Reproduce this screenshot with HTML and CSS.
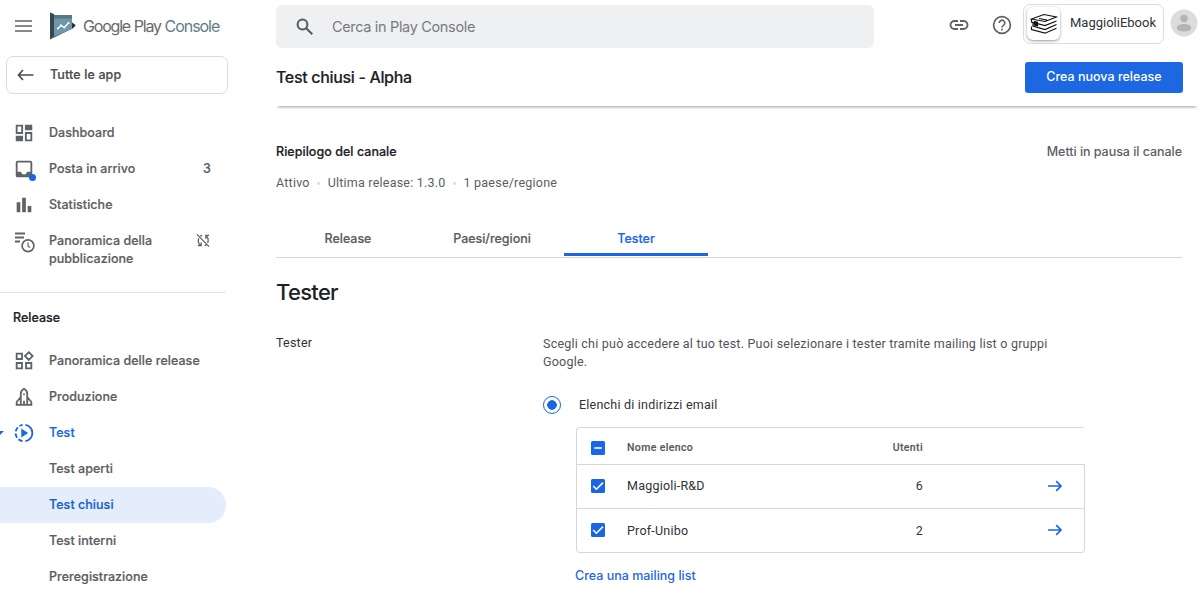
FILE: index.html
```html
<!DOCTYPE html>
<html lang="it">
<head>
<meta charset="utf-8">
<title>Google Play Console</title>
<link rel="stylesheet" href="styles.css">
</head>
<body>
<div class="app">
  <aside class="sidebar">
    <div class="brand">
      <svg class="menu-icon" viewBox="0 0 18 14"><path d="M0 2h17M0 7h17M0 12h17"/></svg>
      <svg class="logo" viewBox="0 0 26 28">
        <path fill="#37474f" d="M0 .5 4 2v22.500L0 27.500z"/>
        <path fill="#455a64" d="M0 27.500 4 23.500 20 17l2.500-.5z"/>
        <path fill="#6f96aa" d="M4 3h18v14L4 24.500z"/>
        <path fill="#54778a" d="M4 3h18v3.500H4z"/>
        <path fill="#263238" d="M22 10.500l3.300 2.300v1.200L22 17z"/>
        <path fill="none" stroke="#fff" stroke-width="1.300" d="M8 16.500l3-3 3.300 2 4.200-4.500"/>
        <g fill="#fff"><circle cx="8" cy="16.500" r="1.100"/><circle cx="11" cy="13.400" r="1.100"/><circle cx="14.300" cy="15.500" r="1.100"/><circle cx="18.500" cy="11" r="1.100"/></g>
      </svg>
      <span class="brand-name">Google Play <span class="brand-sub">Console</span></span>
    </div>
    <a class="all-apps">
      <svg class="back" viewBox="0 0 17 12"><path d="M6 1 1.500 6 6 11M1.500 6H16.500"/></svg>
      <span>Tutte le app</span>
    </a>
    <nav class="nav">
      <a class="item"><svg class="ico" viewBox="0 0 24 24"><path d="M19 5v2h-4V5h4M9 5v6H5V5h4m10 8v6h-4v-6h4M9 17v2H5v-2h4M21 3h-8v6h8V3zM11 3H3v10h8V3zm10 8h-8v10h8V11zm-10 4H3v6h8v-6z"/><path d="M14 4h6v4h-6zM4 16h6v4H4z"/></svg><span>Dashboard</span></a>
      <a class="item"><span class="badge-wrap"><svg class="ico" viewBox="0 0 24 24"><path d="M19 3H5a2 2 0 0 0-2 2v14a2 2 0 0 0 2 2h14a2 2 0 0 0 2-2V5a2 2 0 0 0-2-2zm0 12h-4a3 3 0 0 1-6 0H5V5h14z"/></svg><i class="dot"></i></span><span>Posta in arrivo</span><span class="count">3</span></a>
      <a class="item"><svg class="ico" viewBox="0 0 24 24"><path d="M4 9h4v11H4zM10 4h4v16h-4zM16 13h4v7h-4z"/></svg><span>Statistiche</span></a>
      <a class="item two-line">
        <svg class="ico-wide" viewBox="0 0 21 21"><path fill="none" stroke="#5f6368" stroke-width="1.800" d="M0 1.500h10M0 5.500h9M0 9.500h5"/><path fill="none" stroke="#5f6368" stroke-width="1.200" d="M13 10.500V14l2.200 1.500"/><circle cx="13" cy="13.700" r="5.900" fill="none" stroke="#5f6368" stroke-width="1.700"/></svg>
        <span>Panoramica della<br>pubblicazione</span>
        <svg class="sync-off" viewBox="0 0 16 16"><path d="M1 1.500 14 14.500M6.500 2.500Q5 3 4.500 3.500M3 5.500Q1 10 5 13M2 13.500h3.500V10M9 13.500Q11 13 11.500 12M12.500 10.500Q14 6 11 3M14 2.500h-3.500V6"/></svg>
      </a>
    </nav>
    <div class="divider"></div>
    <h2 class="nav-title">Release</h2>
    <nav class="nav">
      <a class="item"><svg class="ico" viewBox="0 0 24 24"><path fill="none" stroke="#5f6368" stroke-width="2" d="M4 4h5.800v5.800H4zM4 14.200h5.800V20H4zM14.200 14.200H20V20h-5.800zM17.200 2.400 21.400 6.600l-4.200 4.200L13 6.600z"/></svg><span>Panoramica delle release</span></a>
      <a class="item"><svg class="ico" viewBox="0 0 24 24"><path fill="none" stroke="#5f6368" stroke-width="2" d="M8.500 20.500V8Q8.800 4.500 12 3q3.200 1.500 3.500 5v12.500M8.500 12 4 17.500v3h16v-3L15.500 12M12 21v-5"/><circle cx="12" cy="9" r="1" fill="#5f6368"/></svg><span>Produzione</span></a>
      <a class="item active"><i class="caret"></i><svg class="ico" viewBox="0 0 24 24"><path d="M9 7v10l7.500-5z"/><path fill="none" stroke="#1a66e6" stroke-width="2" d="M13.500 3.100a9 9 0 0 1 0 17.800"/><path class="dash" d="M10.500 20.900a9 9 0 0 1 0-17.800"/></svg><span>Test</span></a>
      <a class="item sub">Test aperti</a>
      <a class="item sub selected">Test chiusi</a>
      <a class="item sub">Test interni</a>
      <a class="item sub">Preregistrazione</a>
    </nav>
  </aside>

  <main class="main">
    <header class="topbar">
      <div class="search">
        <svg viewBox="0 0 18 18"><circle cx="6.500" cy="6.500" r="4.900"/><path d="M10.200 10.200 16.300 16.300"/></svg>
        <span>Cerca in Play Console</span>
      </div>
      <svg class="link-icon" viewBox="0 0 20 12"><path d="M9 2H5.500a4 4 0 0 0 0 8H9M11 2h3.500a4 4 0 0 1 0 8H11M6 6h8"/></svg>
      <svg class="help-icon" viewBox="0 0 20 20"><circle cx="10" cy="10" r="8.400"/><path d="M7.200 8a2.800 2.700 0 1 1 4.500 2.100Q10 11.200 10 12.500M10 13.700v1.900"/></svg>
      <div class="account">
        <span class="thumb"><svg viewBox="0 0 28 22"><path d="M1.500 6 14 1.500 26.500 4 15 8.500zM1.500 6v3L15 12.500 26.500 8M3 10v3l12 3.500 11.500-5M1.500 13.500v3L15 20.200l11.500-5M9 5.500l8 1.500"/><path class="solid" d="M4.500 8.500l3 .8v3.500l-3-.8z"/></svg></span>
        <span>MaggioliEbook</span>
      </div>
      <svg class="avatar" viewBox="0 0 28 28"><circle cx="14" cy="14" r="13.500" fill="#dcdcdc"/><circle cx="14" cy="9.500" r="3.700" fill="#b4b4b4"/><ellipse cx="14" cy="18.800" rx="7.300" ry="3.800" fill="#b4b4b4"/></svg>
    </header>
    <div class="page-head">
      <h1>Test chiusi - Alpha</h1>
      <button class="primary">Crea nuova release</button>
    </div>
    <div class="content">
      <div class="summary-row"><h3>Riepilogo del canale</h3><a class="pause">Metti in pausa il canale</a></div>
      <p class="status"><span>Attivo</span><i></i><span>Ultima release: 1.3.0</span><i></i><span>1 paese/regione</span></p>
      <div class="tabs">
        <a class="tab">Release</a>
        <a class="tab">Paesi/regioni</a>
        <a class="tab on">Tester</a>
      </div>
      <h2 class="section">Tester</h2>
      <div class="form">
        <div class="label">Tester</div>
        <div class="field">
          <p class="desc">Scegli chi può accedere al tuo test. Puoi selezionare i tester tramite mailing list o gruppi<br>Google.</p>
          <div class="radio-row"><span class="radio"></span><span>Elenchi di indirizzi email</span></div>
          <div class="table">
            <div class="row head">
              <svg class="check" viewBox="0 0 14 14"><rect width="14" height="14" rx="1.500"/><path d="M3.300 7h7.500"/></svg>
              <span>Nome elenco</span><span class="num">Utenti</span>
            </div>
            <div class="row">
              <svg class="check" viewBox="0 0 14 14"><rect width="14" height="14" rx="1.500"/><path d="M2.200 7 5.400 10.200 12 3.600"/></svg>
              <span>Maggioli-R&amp;D</span><span class="num">6</span>
              <svg class="go" viewBox="0 0 16 12"><path d="M1 6h13M9.200 1.200 14 6 9.200 10.800"/></svg>
            </div>
            <div class="row last">
              <svg class="check" viewBox="0 0 14 14"><rect width="14" height="14" rx="1.500"/><path d="M2.200 7 5.400 10.200 12 3.600"/></svg>
              <span class="low">Prof-Unibo</span><span class="num low">2</span>
              <svg class="go" viewBox="0 0 16 12"><path d="M1 6h13M9.200 1.200 14 6 9.200 10.800"/></svg>
            </div>
          </div>
          <a class="create">Crea una mailing list</a>
        </div>
      </div>
    </div>
  </main>
</div>
</body>
</html>
```
FILE: styles.css
```css
* { box-sizing: border-box; }
body { margin: 0; background: #fff; color: #5a5e63; font: 500 12.5px/18px Inter, sans-serif; }
h1, h2, h3, p { margin: 0; }
svg { display: block; flex: none; }
.app { display: flex; width: 1204px; height: 600px; overflow: hidden; }

/* Sidebar */
.sidebar { width: 275px; flex: none; }
.brand { display: flex; align-items: center; height: 52px; padding-left: 15px; }
.menu-icon { width: 18px; height: 14px; fill: none; stroke: #5f6368; stroke-width: 1.6; }
.logo { width: 26px; height: 28px; margin-left: 17px; }
.brand-name { margin-left: 7px; font-size: 16px; font-weight: 400; letter-spacing: -1.2px; word-spacing: .5px; color: #66696b; white-space: nowrap; }
.brand-sub { color: #607d8b; letter-spacing: -1.05px; }
.all-apps { display: flex; align-items: center; width: 222px; height: 38px; margin: 4px 0 21px 6px; padding-left: 10px; border: 1px solid #dadce0; border-radius: 7px; color: #4a4d51; }
.all-apps span { margin-left: 16px; letter-spacing: .12px; }
.back { width: 17px; height: 12px; fill: none; stroke: #4a4d51; stroke-width: 1.7; }
.item, .all-apps, .nav-title, .tab, h3 { -webkit-text-stroke: .2px currentColor; }
.item { position: relative; display: flex; align-items: center; width: 226px; height: 36px; padding-left: 13px; letter-spacing: .04px; white-space: nowrap; }
.item > span:not(.badge-wrap):not(.count) { margin-left: 14px; }
.ico { width: 22px; height: 22px; fill: #5f6368; }
.badge-wrap { position: relative; }
.dot { position: absolute; right: -1px; bottom: -1px; width: 7px; height: 7px; border-radius: 50%; background: #1a66e6; }
.count { margin-left: auto; margin-right: 15px; }
.two-line { height: 54px; }
.two-line > span:not(.count) { margin-left: 13px !important; }
.ico-wide { width: 21px; height: 21px; align-self: flex-start; margin: 9px 0 0 2px; }
.sync-off { width: 15px; height: 15px; align-self: flex-start; margin: 10px 15px 0 auto; fill: none; stroke: #5f6368; stroke-width: 1.4; }
.divider { width: 226px; height: 1px; margin-top: 15px; background: #e3e5e7; }
.nav-title { margin: 16px 0 16px 13px; font: 500 12.5px/18px Inter, sans-serif; color: #202124; }
.active { color: #1a66e6; }
.active .ico { fill: #1a66e6; }
.dash { fill: none; stroke: #1a66e6; stroke-width: 2; stroke-dasharray: 5 2.2; }
.caret { position: absolute; left: -4px; top: 16px; border: 4px solid transparent; border-top-color: #1a66e6; }
.sub { padding-left: 49px; }
.selected { color: #1a5fd0; background: #e4edfc; border-radius: 0 18px 18px 0; }

/* Main */
.main { flex: 1; min-width: 0; }
.topbar { display: flex; height: 50px; padding: 5px 0 0 1px; }
.search { display: flex; align-items: center; width: 598px; height: 43px; padding-left: 20px; border-radius: 6px; background: #eff0f2; color: #777b80; font-size: 14.5px; font-weight: 400; letter-spacing: -.34px; }
.search svg { width: 18px; height: 18px; fill: none; stroke: #55585c; stroke-width: 2; }
.search span { margin-left: 18px; }
.link-icon { width: 20px; height: 12px; margin: 14px 0 0 74.5px; fill: none; stroke: #5f6368; stroke-width: 1.9; }
.help-icon { width: 20px; height: 20px; margin: 10px 0 0 23px; fill: none; stroke: #5f6368; stroke-width: 1.7; }
.account { display: flex; width: 141px; height: 40px; margin: -1px 0 0 11.5px; padding: 3px; border: 1px solid #dadce0; border-radius: 7px; font: 450 13px/29px Roboto, sans-serif; color: #303336; }
.thumb { width: 33px; height: 33px; margin: -1px 10px 0 0; padding: 6px 3px; border-radius: 6px; box-shadow: 0 1px 3px #0006; }
.thumb svg { width: 28px; height: 22px; fill: none; stroke: #111; stroke-width: 1.2; }
.thumb .solid { fill: #111; }
.avatar { width: 28px; height: 28px; margin: 4px 0 0 5.5px; }
.page-head { display: flex; justify-content: space-between; width: 924px; height: 56px; padding: 12px 16px 0 1px; box-shadow: 0 4px 3px -3px #0006; }
h1 { font: 500 16px/31px Inter, sans-serif; letter-spacing: -.33px; color: #202124; -webkit-text-stroke: .15px currentColor; }
.primary { width: 158px; height: 31px; border: 0; border-radius: 3px; background: #1e67e3; color: #fff; font: 500 12.5px/29px Inter, sans-serif; padding: 0 0 2px; }
.content { width: 907px; padding: 37px 0 0 1px; }
.summary-row { display: flex; justify-content: space-between; }
.pause { letter-spacing: -.04px; }
h3 { font: 500 12.5px/18px Inter, sans-serif; letter-spacing: .04px; color: #202124; }
.status { display: flex; align-items: center; margin-top: 13px; font: 400 12.5px/18px Roboto, sans-serif; letter-spacing: .22px; }
.status i { width: 3px; height: 3px; margin: 1px 7.5px 0; border-radius: 50%; background: #dadce0; }
.tabs { display: flex; height: 38px; margin-top: 28px; border-bottom: 1px solid #d5d7da; }
.tab { width: 144px; line-height: 37px; text-align: center; letter-spacing: -.03px; }
.on { height: 36px; color: #1a66e6; border-bottom: 3px solid #1a66e6; border-radius: 2px 2px 0 0; }
.section { margin-top: 19px; font: 500 22px/30px Inter, sans-serif; letter-spacing: -.7px; color: #202124; }
.form { display: grid; grid-template-columns: 267px 1fr; margin-top: 27px; font: 400 12.5px/18px Roboto, sans-serif; letter-spacing: .22px; color: #303336; }
.desc { margin-top: 1px; color: #505357; white-space: nowrap; }
.radio-row { display: flex; align-items: center; gap: 18px; margin-top: 25px; }
.radio { width: 18px; height: 18px; border: 1.5px solid #1a66e6; border-radius: 50%; background: radial-gradient(circle, #1a66e6 4.5px, #fff 5px); }
.table { width: 509px; margin: 13px 0 0 33px; border-bottom: 1px solid #d5d7da; border-radius: 4px; }
.row { display: grid; grid-template-columns: 36px 200px 96px 1fr; align-items: center; height: 44px; padding: 0 0 2px 14px; border: solid #d5d7da; border-width: 1px 1px 0; }
.row.head { height: 37px; padding: 3px 0 0 14px; border-right-color: transparent; border-radius: 4px 4px 0 0; font: 500 10.5px/18px Roboto, sans-serif; letter-spacing: .38px; color: #55595d; -webkit-text-stroke: .15px currentColor; }
.row.last { padding-bottom: 1px; border-radius: 0 0 4px 4px; }
.low { padding-top: 2px; }
.check { width: 14px; height: 14px; fill: #1a66e6; }
.check path { fill: none; stroke: #fff; stroke-width: 1.6; }
.num { text-align: right; }
.go { width: 16px; height: 12px; margin-left: 124px; fill: none; stroke: #1a66e6; stroke-width: 1.7; }
.create { display: block; margin: 14px 0 0 32px; font: 500 12.5px/18px Inter, sans-serif; letter-spacing: 0; color: #1e67e3; }
```
